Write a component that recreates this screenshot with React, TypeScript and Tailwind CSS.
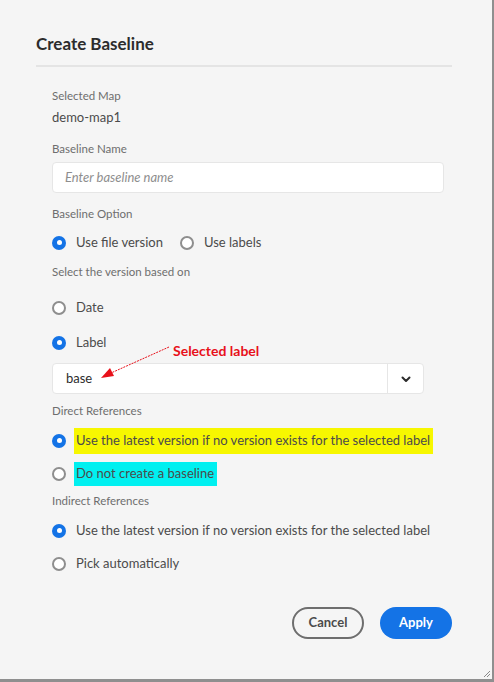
import { FunctionComponent, ReactNode } from "react";

const Radio: FunctionComponent<{ checked?: boolean; children: ReactNode; className?: string; textClass?: string }> = ({
  checked = false,
  children,
  className = "",
  textClass = "ml-[10px]",
}) => {
  return (
    <div className={`flex flex-row items-center pt-[1px] ${className}`}>
      {checked ? (
        <span className="w-[14px] h-[14px] rounded-full bg-[#1473e6] flex items-center justify-center shrink-0">
          <span className="w-[5px] h-[5px] rounded-full bg-white" />
        </span>
      ) : (
        <span className="w-[14px] h-[14px] rounded-full border-2 border-[#8e8e8e] bg-white shrink-0" />
      )}
      <span className={`text-[13px] text-[#4b4b4b] whitespace-nowrap ${textClass}`}>{children}</span>
    </div>
  );
};

const Label: FunctionComponent<{ children: ReactNode; className?: string }> = ({ children, className = "" }) => (
  <div className={`h-[20px] flex items-center text-[11.5px] text-[#6e6e6e] ${className}`}>{children}</div>
);

const App: FunctionComponent = () => {
  return (
    <div className="w-[494px] h-[682px] bg-[#f5f5f5] border-r-[2px] border-b-[3px] border-[#8f8f8f] box-border relative font-['Lato','Noto_Sans',sans-serif] flex flex-col">
      <div className="px-[36px]">
        <h1 className="mt-[32px] h-[24px] flex items-center text-[17px] font-bold text-[#2c2c2c]">Create Baseline</h1>
        <div className="mt-[9px] h-[2px] w-[416px] bg-[#e4e4e4]" />
      </div>

      <div className="pl-[52px] pr-[50px] flex flex-col">
        <Label className="mt-[19px]">Selected Map</Label>
        <div className="mt-[1px] h-[22px] flex items-center text-[13px] text-[#4b4b4b]">demo-map1</div>

        <Label className="mt-[10px]">Baseline Name</Label>
        <div className="mt-[3px] h-[31px] w-[392px] bg-white border border-[#e6e6e6] rounded-[4px] flex items-center pl-[12px] text-[13px] italic text-[#8e8e8e]">
          Enter baseline name
        </div>

        <Label className="mt-[11px]">Baseline Option</Label>
        <div className="mt-[6px] h-[24px] flex flex-row items-center gap-[17px]">
          <Radio checked>Use file version</Radio>
          <Radio>Use labels</Radio>
        </div>

        <Label className="mt-[8px]">Select the version based on</Label>
        <Radio className="mt-[13px] h-[24px]">Date</Radio>
        <Radio checked className="mt-[11px] h-[24px]">
          Label
        </Radio>

        <div className="mt-[9px] h-[31px] w-[372px] bg-white border border-[#e6e6e6] rounded-[4px] flex flex-row items-stretch">
          <div className="flex-1 flex items-center pl-[13px] text-[13px] text-[#2c2c2c]">base</div>
          <div className="w-[36px] border-l border-[#e6e6e6] flex items-center justify-center">
            <svg width="12" height="12" viewBox="0 0 12 12">
              <path d="M2.5 4.5 L6 8 L9.5 4.5" fill="none" stroke="#2c2c2c" strokeWidth="2" strokeLinecap="round" strokeLinejoin="round" />
            </svg>
          </div>
        </div>

        <Label className="mt-[7px]">Direct References</Label>
        <Radio checked className="mt-[6px] h-[26px]" textClass="ml-[8px] bg-[#f7f700] h-[26px] flex items-center pl-[2px] pr-[3px]">
          Use the latest version if no version exists for the selected label
        </Radio>
        <Radio className="mt-[8px] h-[24px]" textClass="ml-[8px] bg-[#00f0f0] h-[24px] flex items-center pl-[2px] pr-[3px]">
          Do not create a baseline
        </Radio>

        <Label className="mt-[6px]">Indirect References</Label>
        <Radio checked className="mt-[7px] h-[24px]">
          Use the latest version if no version exists for the selected label
        </Radio>
        <Radio className="mt-[9px] h-[24px]">Pick automatically</Radio>
      </div>

      <div className="mt-[32px] pr-[40px] flex flex-row justify-end gap-[16px]">
        <button className="h-[32px] w-[72px] rounded-full border-2 border-[#6e6e6e] text-[13px] font-bold text-[#4b4b4b]">
          Cancel
        </button>
        <button className="h-[32px] w-[72px] rounded-full bg-[#1473e6] text-[13px] font-bold text-white">Apply</button>
      </div>

      {/* annotation */}
      <div className="absolute left-[173px] top-[340px] text-[14px] font-bold text-[#e8101a]">Selected label</div>
      <svg className="absolute left-0 top-0 pointer-events-none" width="494" height="682">
        <line x1="169" y1="347" x2="111" y2="373" stroke="#e8101a" strokeWidth="1" strokeDasharray="2 1" />
        <path d="M101 378 L110 368 L114 376 Z" fill="#e8101a" />
      </svg>

      {/* resize grip */}
      <svg className="absolute right-[1px] bottom-[1px]" width="8" height="8" viewBox="0 0 8 8">
        <path d="M7 1 L1 7 M7 4 L4 7" stroke="#8a8a8a" strokeWidth="1" />
      </svg>
    </div>
  );
};

export default App;
